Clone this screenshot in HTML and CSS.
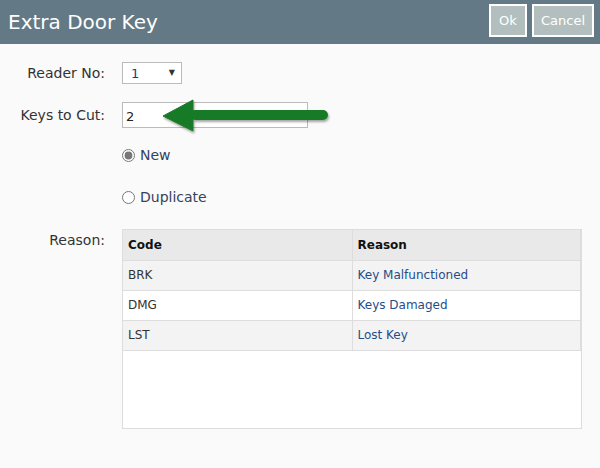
FILE: index.html
```html
<!DOCTYPE html>
<html lang="en">
<head>
  <meta charset="UTF-8">
  <meta name="viewport" content="width=device-width, initial-scale=1">
  <title>Extra Door Key</title>
  <link rel="stylesheet" href="styles.css">
</head>
<body>

  <div class="title-bar">
    <h1>Extra Door Key</h1>
    <div class="title-buttons">
      <button class="btn btn-ok">Ok</button>
      <button class="btn btn-cancel">Cancel</button>
    </div>
  </div>

  <form class="key-form">
    <div class="form-row row-reader">
      <label for="reader">Reader No:</label>
      <div class="select-wrap">
        <select id="reader">
          <option>1</option>
          <option>2</option>
        </select>
      </div>
    </div>

    <div class="form-row row-keys">
      <label for="keys">Keys to Cut:</label>
      <input type="text" id="keys" value="2">
    </div>

    <div class="form-row row-new">
      <span></span>
      <label class="radio"><input type="radio" name="kind" checked> New</label>
    </div>

    <div class="form-row row-dup">
      <span></span>
      <label class="radio"><input type="radio" name="kind"> Duplicate</label>
    </div>

    <div class="form-row row-reason">
      <label>Reason:</label>
      <div class="grid-box">
        <table class="reason-table">
          <thead>
            <tr>
              <th>Code</th>
              <th>Reason</th>
            </tr>
          </thead>
          <tbody>
            <tr>
              <td>BRK</td>
              <td class="desc">Key Malfunctioned</td>
            </tr>
            <tr>
              <td>DMG</td>
              <td class="desc">Keys Damaged</td>
            </tr>
            <tr>
              <td>LST</td>
              <td class="desc">Lost Key</td>
            </tr>
          </tbody>
        </table>
      </div>
    </div>
  </form>

  <!-- Callout arrow pointing at the Keys to Cut field -->
  <svg class="callout-arrow" width="190" height="50" viewBox="0 0 190 50">
    <defs>
      <filter id="shadow" x="-10%" y="-30%" width="120%" height="160%">
        <feDropShadow dx="1" dy="2" stdDeviation="1.2" flood-color="#000" flood-opacity="0.35"/>
      </filter>
    </defs>
    <g filter="url(#shadow)" fill="#187a26" stroke="#187a26">
      <line x1="40" y1="20" x2="168" y2="20" stroke-width="10" stroke-linecap="round"/>
      <polygon points="8,21 38,5 38,36" stroke-width="1" stroke-linejoin="round"/>
    </g>
  </svg>

</body>
</html>
```

FILE: styles.css
```css
body {
  margin: 0;
  font-family: "DejaVu Sans", Verdana, sans-serif;
  font-size: 14px;
  color: #333;
  background-color: #fafafa;
}

.title-bar {
  display: flex;
  align-items: center;
  justify-content: space-between;
  height: 44px;
  padding: 0 6px 0 8px;
  background-color: #637a86;
}

.title-bar h1 {
  margin: 0;
  font-size: 20px;
  font-weight: normal;
  color: #fff;
}

.title-buttons {
  display: flex;
  gap: 5px;
  margin-top: -3px;
}

.btn {
  height: 33px;
  padding: 0 6px;
  border: 2px solid #fff;
  background-color: #b3bfbe;
  color: #fff;
  font-family: "DejaVu Sans", Verdana, sans-serif;
  font-size: 13px;
}

.btn-ok {
  width: 38px;
}

.btn-cancel {
  width: 62px;
}

.key-form {
  padding-top: 18px;
}

.form-row {
  display: grid;
  grid-template-columns: 105px 1fr;
  column-gap: 17px;
  align-items: center;
}

.form-row > label {
  text-align: right;
  white-space: nowrap;
}

.row-keys {
  margin-top: 18px;
}

.row-new {
  margin-top: 19px;
}

.row-dup {
  margin-top: 26px;
}

.row-reason {
  margin-top: 24px;
  align-items: start;
}

.row-reason > label {
  margin-top: 3px;
}

.select-wrap {
  position: relative;
  width: 60px;
}

.select-wrap::after {
  content: "\25BC";
  position: absolute;
  right: 7px;
  top: 6px;
  font-size: 8px;
  color: #333;
  pointer-events: none;
}

select {
  appearance: none;
  -webkit-appearance: none;
  width: 60px;
  height: 22px;
  padding: 0 0 0 8px;
  border: 1px solid #bbb;
  border-radius: 0;
  background-color: #fff;
  color: #1f3f7a;
  font-family: "DejaVu Sans", Verdana, sans-serif;
  font-size: 13px;
}

input[type="text"] {
  box-sizing: border-box;
  width: 186px;
  height: 26px;
  padding: 2px 3px 0;
  border: 1px solid #bbb;
  background-color: #fff;
  color: #222;
  font-family: "DejaVu Sans", Verdana, sans-serif;
  font-size: 13px;
}

.radio {
  display: flex;
  align-items: center;
  gap: 5px;
  color: #34425e;
}

.radio input {
  width: 13px;
  height: 13px;
  margin: 0;
  accent-color: #777;
}

.grid-box {
  box-sizing: border-box;
  width: 460px;
  height: 200px;
  border: 1px solid #ddd;
  background-color: #fff;
}

.reason-table {
  width: 458px;
  border-collapse: collapse;
}

.reason-table th,
.reason-table td {
  box-sizing: border-box;
  height: 30px;
  padding: 0 6px 0 5px;
  border: 1px solid #ddd;
  text-align: left;
  font-size: 12px;
}

.reason-table tr > :first-child {
  width: 229px;
  border-left: none;
}

.reason-table th {
  border-top: none;
  background-color: #e9e9e9;
  color: #111;
  font-weight: bold;
}

.reason-table td {
  color: #333;
}

.reason-table td.desc {
  color: #1f4e89;
}

.reason-table tbody tr:nth-child(odd) {
  background-color: #f3f3f3;
}

.callout-arrow {
  position: absolute;
  left: 155px;
  top: 95px;
}
```
